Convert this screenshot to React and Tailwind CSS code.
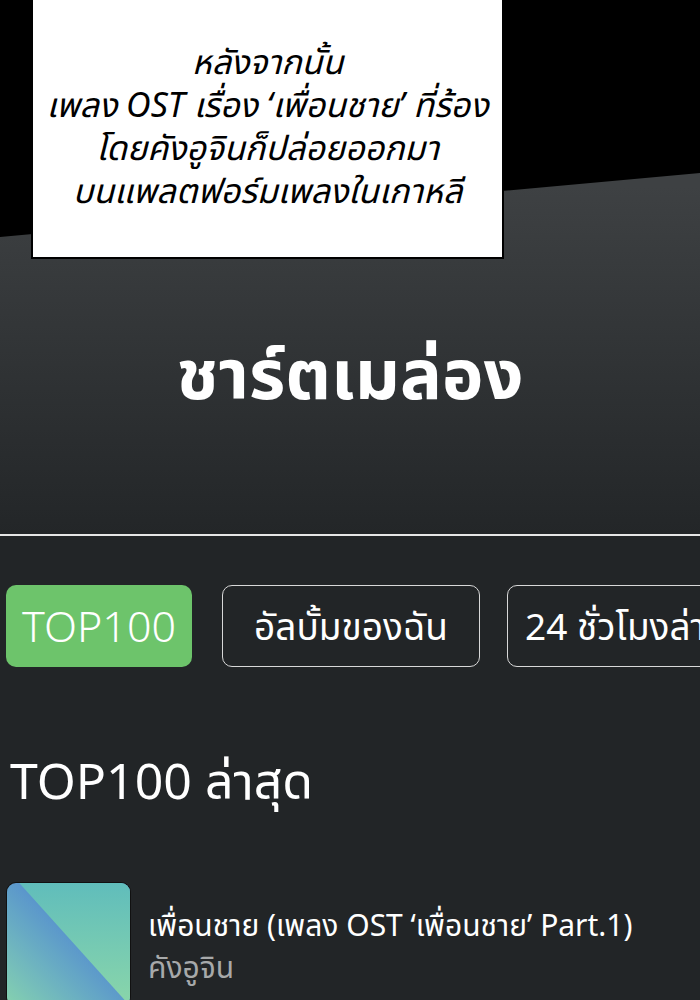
import React from 'react'

const Tab = ({ children, active, className = '' }) => (
    <div
        className={`shrink-0 h-[82px] flex items-center justify-center rounded-[10px] text-white ${
            active ? 'bg-[#6dc46b] font-light' : 'border border-[#d8d8d8]'
        } ${className}`}
    >
        {children}
    </div>
)

const App = () => {
    return (
        <div
            className="relative w-[700px] h-[1000px] overflow-hidden bg-[#222527]"
            style={{ fontFamily: '"Noto Sans", "Noto Sans Thai", sans-serif' }}
        >
            {/* top panel: black sky cut by a diagonal, grey gradient below */}
            <div className="relative h-[534px] bg-gradient-to-b from-[#3e4143] from-[35%] to-[#232628]">
                <svg className="absolute inset-0" width="700" height="534" viewBox="0 0 700 534">
                    <polygon points="0,0 700,0 700,173 0,237" fill="#000" />
                </svg>

                <div className="relative ml-[31px] w-[473px] h-[259px] bg-white border-2 border-t-0 border-black flex flex-col items-center justify-center pb-[6px]">
                    <div className="text-black text-[34px] leading-[43px] italic text-center">
                        <p>หลังจากนั้น</p>
                        <p>เพลง OST เรื่อง ‘เพื่อนชาย’ ที่ร้อง</p>
                        <p>โดยคังอูจินก็ปล่อยออกมา</p>
                        <p>บนแพลตฟอร์มเพลงในเกาหลี</p>
                    </div>
                </div>

                <h1 className="relative mt-[78px] text-center text-white text-[70px] font-bold leading-none">
                    ชาร์ตเมล่อง
                </h1>
            </div>

            <div className="h-[2px] bg-[#e6e6e6]" />

            <div className="flex gap-[31px] pl-[6px] pt-[49px]">
                <Tab active className="w-[186px] text-[43px]">TOP100</Tab>
                <Tab className="w-[258px] -ml-[1px] text-[37px]">อัลบั้มของฉัน</Tab>
                <Tab className="w-[260px] -ml-[4px] justify-start pl-[17px] text-[37px]">24 ชั่วโมงล่าสุด</Tab>
            </div>

            <h2 className="mt-[88px] pl-[10px] text-white text-[50px] leading-none">TOP100 ล่าสุด</h2>

            <div className="flex items-start gap-[17px] pl-[6px] mt-[77px]">
                <div className="relative w-[125px] h-[125px] shrink-0 rounded-[10px] overflow-hidden border border-[#111]">
                    <div className="absolute inset-0 bg-gradient-to-bl from-[#5a95cc] from-[45%] to-[#86d2ae]" />
                    <div
                        className="absolute inset-0 bg-gradient-to-b from-[#60bdbb] to-[#8ad6a9]"
                        style={{ clipPath: 'polygon(10% 0, 100% 0, 100% 100%)' }}
                    />
                </div>
                <div className="pt-[22px] flex flex-col">
                    <span className="text-white text-[30px] leading-[42px]">
                        เพื่อนชาย (เพลง OST ‘เพื่อนชาย’ Part.1)
                    </span>
                    <span className="text-[#a7a9aa] text-[30px] leading-[42px]">คังอูจิน</span>
                </div>
            </div>
        </div>
    )
}

export default App
